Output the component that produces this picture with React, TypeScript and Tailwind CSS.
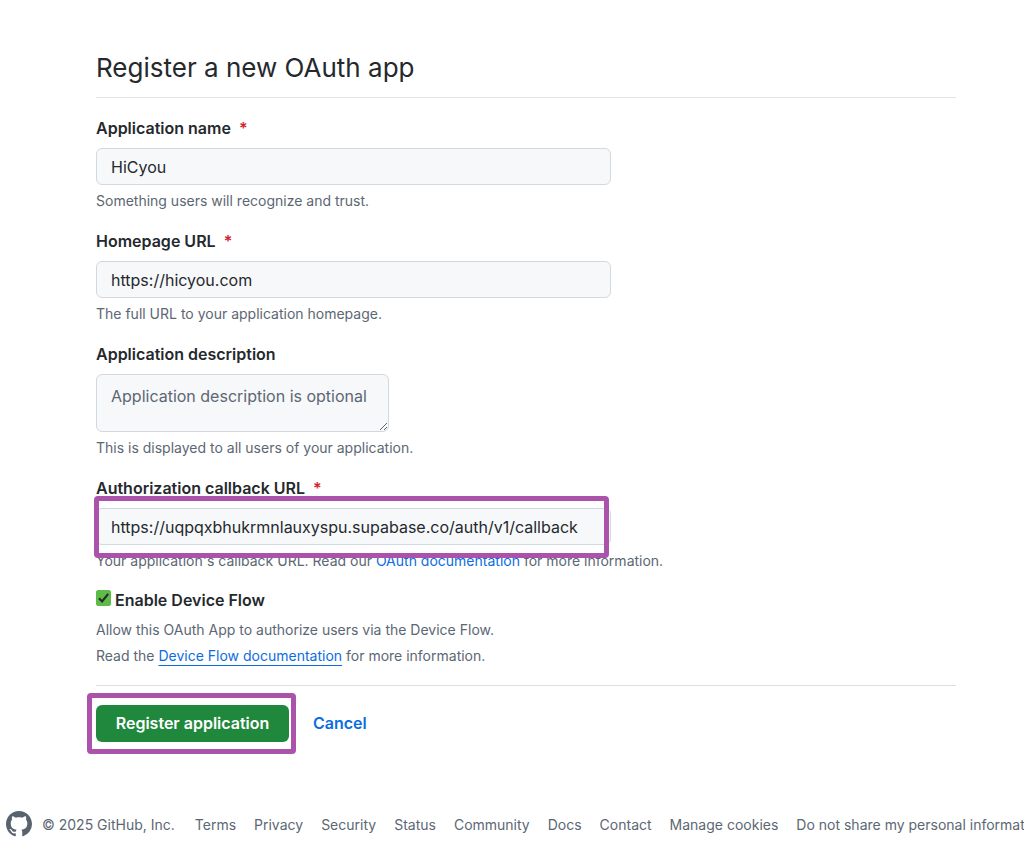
import type { ReactNode } from "react";

const inputClass =
  "block h-[37px] w-full max-w-[515px] rounded-md border border-[#d1d9e0] bg-[#f6f8fa] px-3.5 text-base text-[#25292e] outline-none focus:border-[#0969da]";

const footerLinks = [
  "Terms",
  "Privacy",
  "Security",
  "Status",
  "Community",
  "Docs",
  "Contact",
  "Manage cookies",
  "Do not share my personal information",
];

function Highlight({ className }: { className: string }) {
  return (
    <span
      aria-hidden="true"
      className={`pointer-events-none absolute rounded-sm border-5 border-[#ab52ab] ${className}`}
    />
  );
}

function Field({
  id,
  label,
  required,
  hint,
  children,
}: {
  id: string;
  label: string;
  required?: boolean;
  hint: ReactNode;
  children: ReactNode;
}) {
  return (
    <div>
      <label htmlFor={id} className="mb-2 flex gap-2 text-base leading-6 font-semibold">
        {label}
        {required && <span className="text-[#d1242f]">*</span>}
      </label>
      {children}
      <p id={`${id}-hint`} className="mt-1.5 text-sm leading-5 text-[#5c6773]">
        {hint}
      </p>
    </div>
  );
}

export default function App() {
  return (
    <div className="min-h-screen overflow-x-hidden bg-white font-['Inter',sans-serif] text-[#25292e]">
      <main className="pt-12 pr-[68px] pl-24">
        <h1 className="border-b border-[#dfe3e8] pb-[9px] text-[26px] leading-10 font-normal">
          Register a new OAuth app
        </h1>
        <form className="mt-[18px]" onSubmit={(e) => e.preventDefault()}>
          <div className="flex flex-col gap-[18px]">
            <Field id="name" label="Application name" required hint="Something users will recognize and trust.">
              <input id="name" type="text" required defaultValue="HiCyou" className={inputClass} />
            </Field>
            <Field id="homepage" label="Homepage URL" required hint="The full URL to your application homepage.">
              <input id="homepage" type="url" required defaultValue="https://hicyou.com" className={inputClass} />
            </Field>
            <Field
              id="description"
              label="Application description"
              hint="This is displayed to all users of your application."
            >
              <textarea
                id="description"
                placeholder="Application description is optional"
                className="block h-[58px] w-[293px] max-w-full resize rounded-md border border-[#d1d9e0] bg-[#f6f8fa] px-3.5 py-[9px] text-base leading-6 outline-none placeholder:text-[#5c6773]"
              />
            </Field>
            <Field
              id="callback"
              label="Authorization callback URL"
              required
              hint={
                <>
                  Your application's callback URL. Read our{" "}
                  <a href="#oauth-docs" className="text-[#0b6de0]">
                    OAuth documentation
                  </a>{" "}
                  for more information.
                </>
              }
            >
              <div className="relative max-w-[515px]">
                <input
                  id="callback"
                  type="url"
                  required
                  defaultValue="https://uqpqxbhukrmnlauxyspu.supabase.co/auth/v1/callback"
                  className={inputClass}
                />
                <Highlight className="-top-3 right-0.5 -bottom-[13px] -left-0.5" />
              </div>
            </Field>
          </div>

          <div className="mt-[17px] flex gap-1">
            <span className="relative mt-0.5 block h-4 w-[15px]">
              <input
                id="device-flow"
                type="checkbox"
                defaultChecked
                className="peer block h-4 w-[15px] appearance-none rounded-xs border border-[#8c959f] bg-white checked:border-[#5dbb46] checked:bg-[#5dbb46]"
              />
              <svg
                viewBox="0 0 15 16"
                className="pointer-events-none absolute inset-0 hidden h-4 w-[15px] peer-checked:block"
                aria-hidden="true"
              >
                <path d="M3 8.2 6.1 11.4 12.2 3.8" fill="none" stroke="#25292e" strokeWidth="2.1" />
              </svg>
            </span>
            <label htmlFor="device-flow" className="text-base leading-6 font-semibold">
              Enable Device Flow
            </label>
          </div>
          <p className="mt-[5px] text-sm leading-[26px] text-[#5c6773]">
            Allow this OAuth App to authorize users via the Device Flow.
            <br />
            Read the{" "}
            <a href="#device-flow-docs" className="text-[#0b6de0] underline underline-offset-4">
              Device Flow documentation
            </a>{" "}
            for more information.
          </p>

          <div className="mt-4 flex items-center gap-6 border-t border-[#d8dee4] pt-[19px]">
            <div className="relative">
              <button
                type="submit"
                className="block h-[37px] w-[193px] rounded-md bg-[#1f883d] pb-0.5 text-base font-semibold whitespace-nowrap text-white"
              >
                Register application
              </button>
              <Highlight className="-top-3 -right-[7px] -bottom-3 -left-[9px]" />
            </div>
            <a href="#cancel" className="pb-0.5 text-base font-semibold text-[#0b6de0]">
              Cancel
            </a>
          </div>
        </form>
      </main>

      <footer className="mt-[69px] flex items-center pl-1.5 text-sm leading-5 whitespace-nowrap text-[#5c6773]">
        <a href="#github" aria-label="GitHub" className="shrink-0">
          <svg viewBox="0 0 16 16" className="h-[26px] w-[26px] fill-[#59636e]" aria-hidden="true">
            <path d="M8 0C3.58 0 0 3.58 0 8c0 3.54 2.29 6.53 5.47 7.59.4.07.55-.17.55-.38 0-.19-.01-.82-.01-1.49-2.01.37-2.53-.49-2.69-.94-.09-.23-.48-.94-.82-1.13-.28-.15-.68-.52-.01-.53.63-.01 1.08.58 1.23.82.72 1.21 1.87.87 2.33.66.07-.52.28-.87.51-1.07-1.78-.2-3.64-.89-3.64-3.95 0-.87.31-1.59.82-2.15-.08-.2-.36-1.02.08-2.12 0 0 .67-.21 2.2.82.64-.18 1.32-.27 2-.27s1.36.09 2 .27c1.53-1.04 2.2-.82 2.2-.82.44 1.1.16 1.92.08 2.12.51.56.82 1.27.82 2.15 0 3.07-1.87 3.75-3.65 3.95.29.25.54.73.54 1.48 0 1.07-.01 1.93-.01 2.2 0 .21.15.46.55.38A8.01 8.01 0 0 0 16 8c0-4.42-3.58-8-8-8Z" />
          </svg>
        </a>
        <span className="mt-0.5 ml-2.5">© 2025 GitHub, Inc.</span>
        <nav aria-label="Footer" className="mt-0.5 ml-5 flex gap-[18px]">
          {footerLinks.map((text) => (
            <a key={text} href="#footer">
              {text}
            </a>
          ))}
        </nav>
      </footer>
    </div>
  );
}
